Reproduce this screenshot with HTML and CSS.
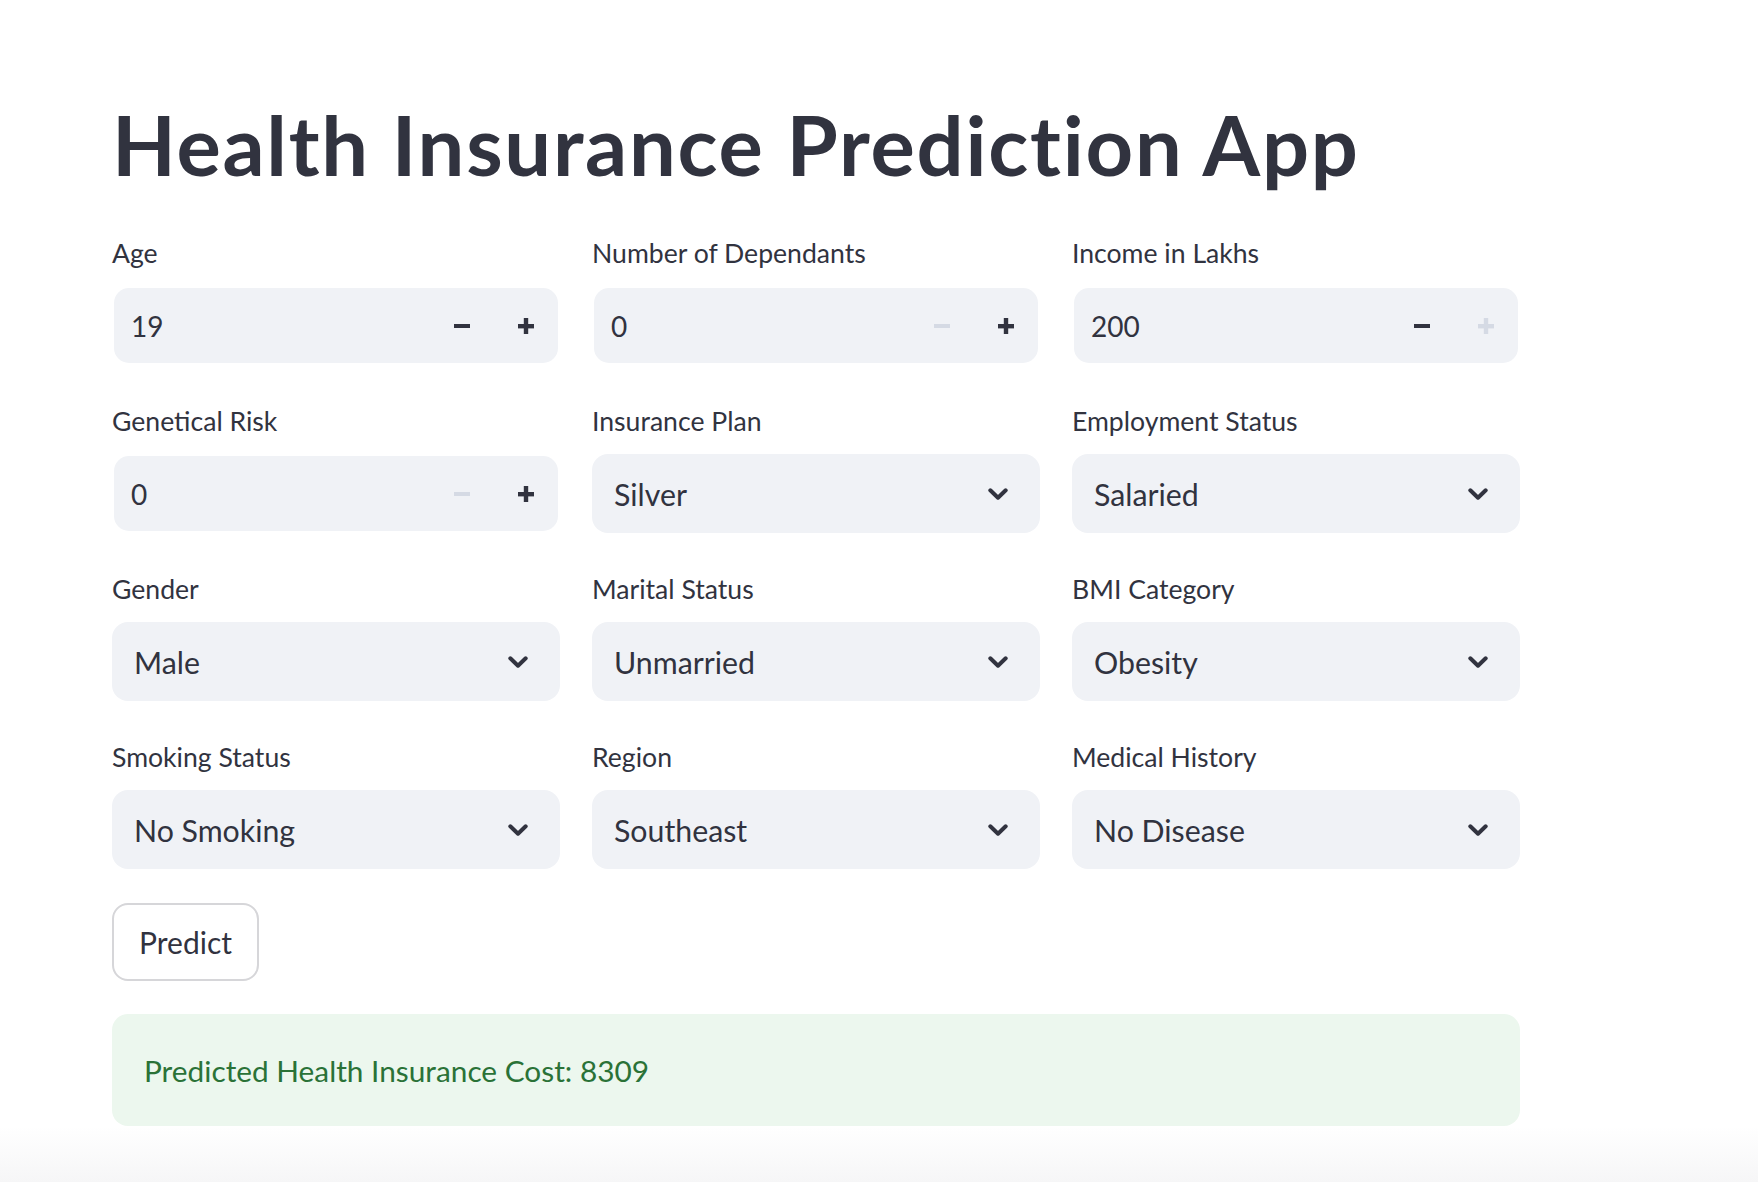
FILE: index.html
```html
<!DOCTYPE html>
<html lang="en">
<head>
<meta charset="utf-8">
<title>Health Insurance Prediction App</title>
<link rel="stylesheet" href="styles.css">
</head>
<body>
<main class="page">
  <h1 class="title">Health Insurance Prediction App</h1>
  <div class="form">
    <div class="field">
      <div class="label">Age</div>
      <div class="num"><span class="num-val">19</span>
        <span class="step"><svg width="16" height="16" viewBox="0 0 16 16"><rect x="0" y="6" width="16" height="4" fill="currentColor"/></svg></span>
        <span class="step"><svg width="16" height="16" viewBox="0 0 16 16"><rect x="0" y="6" width="16" height="4.4" fill="currentColor"/><rect x="5.8" y="0" width="4.4" height="16" fill="currentColor"/></svg></span>
      </div>
    </div>
    <div class="field">
      <div class="label">Number of Dependants</div>
      <div class="num"><span class="num-val">0</span>
        <span class="step off"><svg width="16" height="16" viewBox="0 0 16 16"><rect x="0" y="6" width="16" height="4" fill="currentColor"/></svg></span>
        <span class="step"><svg width="16" height="16" viewBox="0 0 16 16"><rect x="0" y="6" width="16" height="4.4" fill="currentColor"/><rect x="5.8" y="0" width="4.4" height="16" fill="currentColor"/></svg></span>
      </div>
    </div>
    <div class="field">
      <div class="label">Income in Lakhs</div>
      <div class="num"><span class="num-val">200</span>
        <span class="step"><svg width="16" height="16" viewBox="0 0 16 16"><rect x="0" y="6" width="16" height="4" fill="currentColor"/></svg></span>
        <span class="step off"><svg width="16" height="16" viewBox="0 0 16 16"><rect x="0" y="6" width="16" height="4.4" fill="currentColor"/><rect x="5.8" y="0" width="4.4" height="16" fill="currentColor"/></svg></span>
      </div>
    </div>

    <div class="field">
      <div class="label">Genetical Risk</div>
      <div class="num"><span class="num-val">0</span>
        <span class="step off"><svg width="16" height="16" viewBox="0 0 16 16"><rect x="0" y="6" width="16" height="4" fill="currentColor"/></svg></span>
        <span class="step"><svg width="16" height="16" viewBox="0 0 16 16"><rect x="0" y="6" width="16" height="4.4" fill="currentColor"/><rect x="5.8" y="0" width="4.4" height="16" fill="currentColor"/></svg></span>
      </div>
    </div>
    <div class="field">
      <div class="label">Insurance Plan</div>
      <div class="select"><span class="sel-val">Silver</span><svg class="chev" width="20" height="12" viewBox="0 0 20 12"><path d="M2.3 2.3 L10 9.7 L17.7 2.3" fill="none" stroke="currentColor" stroke-width="4" stroke-linecap="round" stroke-linejoin="round"/></svg></div>
    </div>
    <div class="field">
      <div class="label">Employment Status</div>
      <div class="select"><span class="sel-val">Salaried</span><svg class="chev" width="20" height="12" viewBox="0 0 20 12"><path d="M2.3 2.3 L10 9.7 L17.7 2.3" fill="none" stroke="currentColor" stroke-width="4" stroke-linecap="round" stroke-linejoin="round"/></svg></div>
    </div>

    <div class="field">
      <div class="label">Gender</div>
      <div class="select"><span class="sel-val">Male</span><svg class="chev" width="20" height="12" viewBox="0 0 20 12"><path d="M2.3 2.3 L10 9.7 L17.7 2.3" fill="none" stroke="currentColor" stroke-width="4" stroke-linecap="round" stroke-linejoin="round"/></svg></div>
    </div>
    <div class="field">
      <div class="label">Marital Status</div>
      <div class="select"><span class="sel-val">Unmarried</span><svg class="chev" width="20" height="12" viewBox="0 0 20 12"><path d="M2.3 2.3 L10 9.7 L17.7 2.3" fill="none" stroke="currentColor" stroke-width="4" stroke-linecap="round" stroke-linejoin="round"/></svg></div>
    </div>
    <div class="field">
      <div class="label">BMI Category</div>
      <div class="select"><span class="sel-val">Obesity</span><svg class="chev" width="20" height="12" viewBox="0 0 20 12"><path d="M2.3 2.3 L10 9.7 L17.7 2.3" fill="none" stroke="currentColor" stroke-width="4" stroke-linecap="round" stroke-linejoin="round"/></svg></div>
    </div>

    <div class="field">
      <div class="label">Smoking Status</div>
      <div class="select"><span class="sel-val">No Smoking</span><svg class="chev" width="20" height="12" viewBox="0 0 20 12"><path d="M2.3 2.3 L10 9.7 L17.7 2.3" fill="none" stroke="currentColor" stroke-width="4" stroke-linecap="round" stroke-linejoin="round"/></svg></div>
    </div>
    <div class="field">
      <div class="label">Region</div>
      <div class="select"><span class="sel-val">Southeast</span><svg class="chev" width="20" height="12" viewBox="0 0 20 12"><path d="M2.3 2.3 L10 9.7 L17.7 2.3" fill="none" stroke="currentColor" stroke-width="4" stroke-linecap="round" stroke-linejoin="round"/></svg></div>
    </div>
    <div class="field">
      <div class="label">Medical History</div>
      <div class="select"><span class="sel-val">No Disease</span><svg class="chev" width="20" height="12" viewBox="0 0 20 12"><path d="M2.3 2.3 L10 9.7 L17.7 2.3" fill="none" stroke="currentColor" stroke-width="4" stroke-linecap="round" stroke-linejoin="round"/></svg></div>
    </div>
  </div>

  <button class="btn" type="button">Predict</button>

  <div class="success">Predicted Health Insurance Cost: 8309</div>
</main>
</body>
</html>
```

FILE: styles.css
```css
html {
  background: linear-gradient(to bottom, #ffffff 0, #ffffff 1126px, #f6f6f7 1182px) no-repeat;
  min-height: 1182px;
}

body {
  margin: 0;
  font-family: Lato, "Noto Sans", sans-serif;
  color: #31333f;
}

.page {
  width: 1408px;
  padding: 94px 0 0 112px;
}

.title {
  margin: 0 0 37px 0;
  font-size: 83px;
  line-height: 100px;
  font-weight: 700;
  color: #31333f;
  letter-spacing: 1.75px;
  white-space: nowrap;
}

.form {
  display: grid;
  grid-template-columns: repeat(3, 448px);
  column-gap: 32px;
  row-gap: 34px;
}

.field {
  display: flex;
  flex-direction: column;
}

.label {
  font-size: 26.6px;
  line-height: 44px;
  height: 44px;
  margin-bottom: 11px;
  white-space: nowrap;
}

.num {
  margin: 2px;
  height: 75px;
  border-radius: 15px;
  background: #f0f2f6;
  display: flex;
  align-items: center;
}

.num-val {
  flex: 1;
  padding-left: 17px;
  font-size: 28px;
}

.step {
  width: 64px;
  height: 75px;
  display: flex;
  align-items: center;
  justify-content: center;
  color: #31333f;
}

.step.off {
  color: #d5dae4;
}

.select {
  height: 79px;
  border-radius: 16px;
  background: #f0f2f6;
  display: flex;
  align-items: center;
  padding: 0 32px 0 22px;
}

.sel-val {
  flex: 1;
  font-size: 30.3px;
}

.chev {
  color: #31333f;
  display: block;
}

.btn {
  display: block;
  margin-top: 34px;
  width: 147px;
  height: 78px;
  border: 2px solid #d6d6d9;
  border-radius: 16px;
  background: #ffffff;
  color: #31333f;
  font-family: Lato, "Noto Sans", sans-serif;
  font-size: 30px;
  padding: 0;
}

.success {
  margin-top: 33px;
  height: 112px;
  box-sizing: border-box;
  border-radius: 16px;
  background: #ecf7ee;
  color: #2a7237;
  font-size: 29.8px;
  display: flex;
  align-items: center;
  padding-left: 32px;
}
```
